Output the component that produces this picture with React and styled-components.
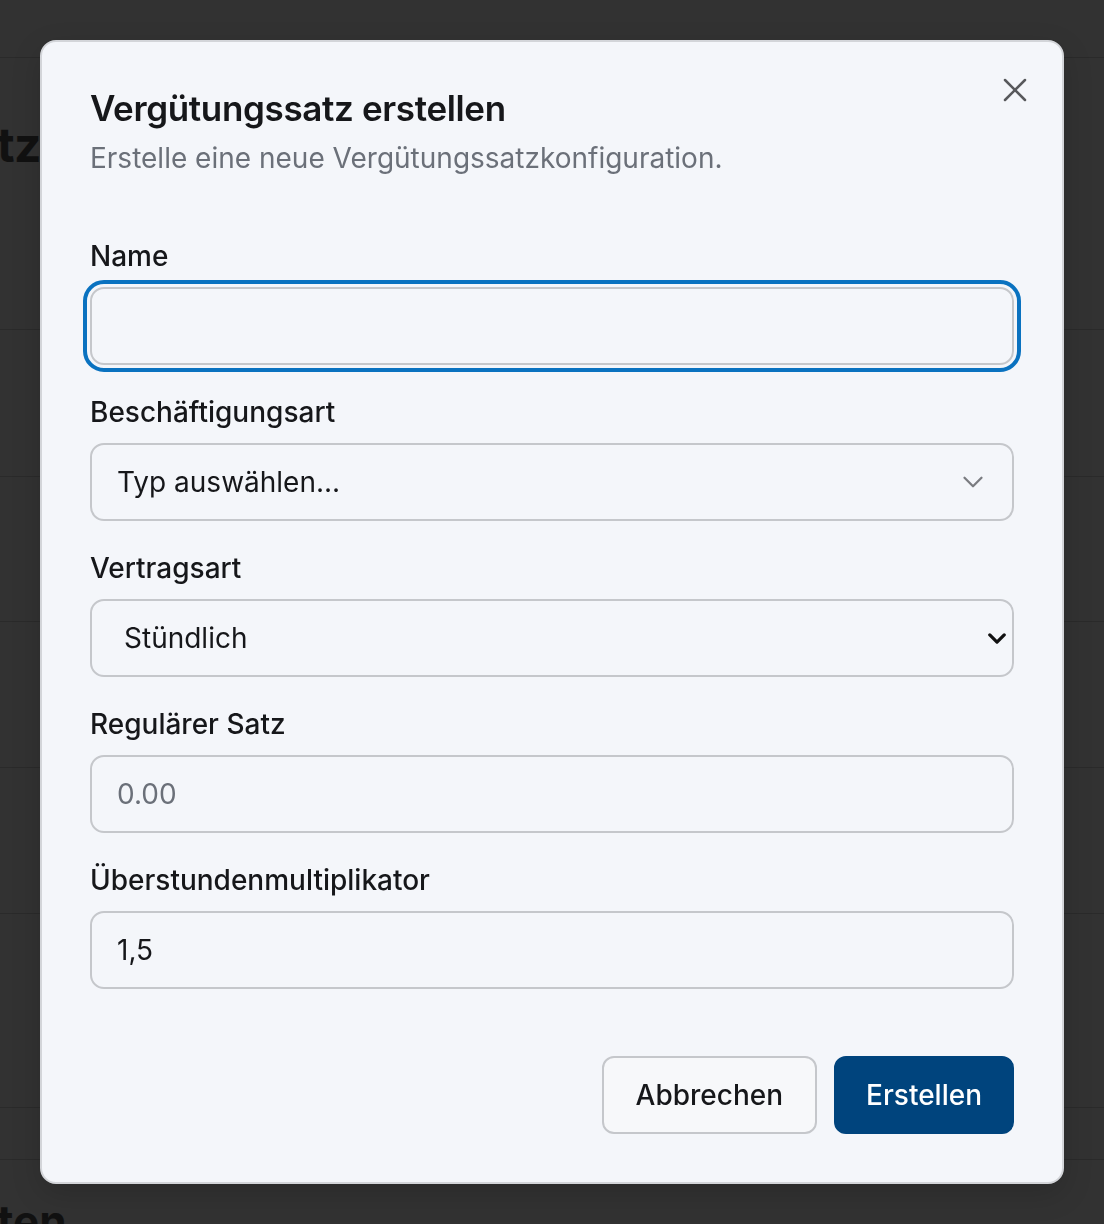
import React from "react";
import styled, { createGlobalStyle } from "styled-components";
import { X, ChevronDown } from "lucide-react";

const GlobalStyle = createGlobalStyle`
  * { box-sizing: border-box; }
  html, body { margin: 0; padding: 0; }
  body {
    font-family: Inter, "Noto Sans", "Liberation Sans", sans-serif;
    background: #323232;
    overflow: hidden;
  }
`;

const rows = [272, 147, 145, 146, 146, 194, 52];

const App = () => {
  return (
    <>
      <GlobalStyle />
      <Backdrop>
        <TopStrip />
        {rows.map((h, i) => (
          <BgRow key={i} $h={h}>
            {i === 0 && (
              <TitleSlot>
                <PageTitle>Vergütungssatz</PageTitle>
              </TitleSlot>
            )}
          </BgRow>
        ))}
        <BottomTitle>Schichten</BottomTitle>
      </Backdrop>

      <Dialog>
        <CloseButton type="button" aria-label="Schließen">
          <X size={40} strokeWidth={1.5} />
        </CloseButton>
        <Header>
          <Title>Vergütungssatz erstellen</Title>
          <Subtitle>Erstelle eine neue Vergütungssatzkonfiguration.</Subtitle>
        </Header>

        <Form>
          <Field>
            <Label>Name</Label>
            <Input type="text" $focused />
          </Field>
          <Field>
            <Label>Beschäftigungsart</Label>
            <Trigger type="button">
              <span>Typ auswählen...</span>
              <ChevronDown size={34} strokeWidth={1.6} color="#7a7c80" />
            </Trigger>
          </Field>
          <Field>
            <Label>Vertragsart</Label>
            <SelectWrap>
              <NativeSelect defaultValue="hourly">
                <option value="hourly">Stündlich</option>
                <option value="salary">Gehalt</option>
              </NativeSelect>
              <SelectArrow viewBox="0 0 20 12">
                <polyline points="2,2 10,10 18,2" />
              </SelectArrow>
            </SelectWrap>
          </Field>
          <Field>
            <Label>Regulärer Satz</Label>
            <Input type="text" placeholder="0.00" />
          </Field>
          <Field>
            <Label>Überstundenmultiplikator</Label>
            <Input type="text" defaultValue="1,5" />
          </Field>
        </Form>

        <Footer>
          <Button type="button">Abbrechen</Button>
          <Button type="button" $primary>
            Erstellen
          </Button>
        </Footer>
      </Dialog>
    </>
  );
};

export default App;

const Backdrop = styled.div`
  display: flex;
  flex-direction: column;
  width: 1104px;
  height: 1224px;
  overflow: hidden;
`;

const TopStrip = styled.div`
  height: 58px;
  flex-shrink: 0;
  border-bottom: 1px solid #2a2a2a;
`;

const BgRow = styled.div`
  height: ${(p) => p.$h}px;
  flex-shrink: 0;
  border-bottom: 1px solid #2a2a2a;
  display: flex;
  align-items: center;
`;

const TitleSlot = styled.div`
  width: 41px;
  display: flex;
  justify-content: flex-end;
  margin-bottom: 98px;
`;

const PageTitle = styled.h1`
  margin: 0;
  font-size: 48px;
  font-weight: 700;
  color: #111111;
  white-space: nowrap;
  letter-spacing: -0.5px;
  flex-shrink: 0;
`;

const BottomTitle = styled.h2`
  margin: 34px 0 0 -150px;
  font-size: 44px;
  font-weight: 700;
  color: #111111;
  white-space: nowrap;
`;

const Dialog = styled.div`
  position: fixed;
  left: 40px;
  top: 40px;
  width: 1024px;
  height: 1144px;
  background: #f4f6fa;
  border: 2px solid #d3d5d9;
  border-radius: 16px;
  padding: 46px 48px 48px;
  display: flex;
  flex-direction: column;
  box-shadow: 0 10px 30px rgba(0, 0, 0, 0.15);
`;

const CloseButton = styled.button`
  position: absolute;
  top: 26px;
  right: 25px;
  width: 44px;
  height: 44px;
  padding: 0;
  border: none;
  background: transparent;
  color: #58595c;
  display: flex;
  align-items: center;
  justify-content: center;
  cursor: pointer;
`;

const Header = styled.div`
  display: flex;
  flex-direction: column;
  gap: 12px;
`;

const Title = styled.h2`
  margin: 0;
  font-size: 35px;
  line-height: 40px;
  font-weight: 600;
  color: #16171a;
  letter-spacing: -0.35px;
`;

const Subtitle = styled.p`
  margin: 0;
  font-size: 28px;
  line-height: 36px;
  color: #6b7079;
`;

const Form = styled.div`
  display: flex;
  flex-direction: column;
  gap: 29px;
  margin-top: 62px;
`;

const Field = styled.div`
  display: flex;
  flex-direction: column;
  gap: 13px;
`;

const Label = styled.label`
  font-size: 28px;
  line-height: 36px;
  font-weight: 500;
  color: #16171a;
`;

const controlBase = `
  width: 100%;
  height: 78px;
  border: 2px solid #c5c7cb;
  border-radius: 14px;
  background: transparent;
  font-family: Inter, "Noto Sans", "Liberation Sans", sans-serif;
  font-size: 28px;
  color: #16171a;
`;

const Input = styled.input`
  ${controlBase}
  padding: 0 25px;
  outline: ${(p) => (p.$focused ? "4px solid #0a72c0" : "none")};
  outline-offset: 3px;
  &::placeholder {
    color: #6b7079;
  }
`;

const Trigger = styled.button`
  ${controlBase}
  padding: 0 22px 0 25px;
  display: flex;
  align-items: center;
  justify-content: space-between;
  text-align: left;
  cursor: pointer;
`;

const SelectWrap = styled.div`
  position: relative;
`;

const NativeSelect = styled.select`
  ${controlBase}
  appearance: none;
  -webkit-appearance: none;
  padding: 0 32px;
  outline: none;
`;

const SelectArrow = styled.svg`
  position: absolute;
  right: 8px;
  top: 34px;
  width: 18px;
  height: 11px;
  fill: none;
  stroke: #111;
  stroke-width: 3.6;
  stroke-linecap: round;
  stroke-linejoin: round;
  pointer-events: none;
`;

const Footer = styled.div`
  margin-top: auto;
  display: flex;
  justify-content: flex-end;
  gap: 17px;
`;

const Button = styled.button`
  height: 78px;
  padding: 0 ${(p) => (p.$primary ? 30 : 32)}px;
  border-radius: 12px;
  font-family: Inter, "Noto Sans", "Liberation Sans", sans-serif;
  font-size: 28px;
  font-weight: 500;
  cursor: pointer;
  border: 2px solid ${(p) => (p.$primary ? "#00447d" : "#c5c7cb")};
  background: ${(p) => (p.$primary ? "#00447d" : "#f7f8fa")};
  color: ${(p) => (p.$primary ? "#ffffff" : "#16171a")};
`;
